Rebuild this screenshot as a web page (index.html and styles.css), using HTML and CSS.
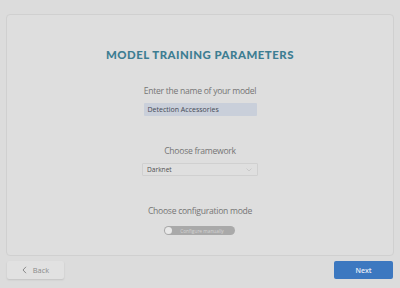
FILE: index.html
```html
<!DOCTYPE html>
<html>
<head>
<meta charset="utf-8">
<link rel="stylesheet" href="styles.css">
</head>
<body>
<div class="page">
  <div class="card">
    <h1 class="title">MODEL TRAINING PARAMETERS</h1>
    <div class="field first">
      <div class="label">Enter the name of your model</div>
      <div class="input">Detection Accessories</div>
    </div>
    <div class="field">
      <div class="label">Choose framework</div>
      <div class="select"><span>Darknet</span>
        <svg class="chev" width="6" height="4" viewBox="0 0 6 4"><path d="M0.5 0.5 L3 3 L5.5 0.5" fill="none" stroke="#c4c4c4" stroke-width="0.8"/></svg>
      </div>
    </div>
    <div class="field">
      <div class="label">Choose configuration mode</div>
      <div class="toggle"><span class="knob"></span><span class="ttext">Configure manually</span></div>
    </div>
  </div>
  <div class="footer">
    <button class="btn back"><svg width="5" height="8" viewBox="0 0 5 8"><path d="M4 0.8 L1 4 L4 7.2" fill="none" stroke="#8a8a8a" stroke-width="1"/></svg><span>Back</span></button>
    <button class="btn next">Next</button>
  </div>
</div>
</body>
</html>
```
FILE: styles.css
```css
html, body {
  margin: 0;
  padding: 0;
  background: #dcdcdc;
  width: 400px;
  height: 288px;
  overflow: hidden;
}
.page {
  display: flex;
  flex-direction: column;
  padding: 14px 6px 0 6px;
  font-family: "Open Sans", "Noto Sans", sans-serif;
}
.card {
  height: 240px;
  border: 1px solid #d0d0d0;
  border-radius: 4px;
  background: #dedede;
  display: flex;
  flex-direction: column;
  align-items: center;
}
.title {
  margin: 33px 0 0 0;
  font-family: "Lato", sans-serif;
  font-weight: 900;
  font-size: 11.4px;
  letter-spacing: 0.5px;
  color: #3d7d92;
  line-height: 14px;
}
.field {
  display: flex;
  flex-direction: column;
  align-items: center;
  margin-top: 29px;
}
.field.first {
  margin-top: 23px;
}
.label {
  font-size: 8.6px;
  letter-spacing: -0.28px;
  color: #757575;
  line-height: 12px;
}
.input {
  margin-top: 6px;
  width: 109px;
  height: 13px;
  background: #c9cfda;
  border-radius: 1px;
  font-size: 7px;
  line-height: 13px;
  color: #454a55;
  padding-left: 4px;
  box-sizing: content-box;
}
.select {
  margin-top: 6px;
  width: 105px;
  height: 11px;
  border: 1px solid #d0d0d0;
  border-radius: 1px;
  background: #dfdfdf;
  font-size: 6.6px;
  line-height: 11px;
  color: #505050;
  padding: 0 5px 0 4px;
  display: flex;
  align-items: center;
  justify-content: space-between;
}
.toggle {
  margin-top: 9px;
  width: 71px;
  height: 9px;
  border-radius: 5px;
  background: #a9a9a9;
  display: flex;
  align-items: center;
}
.knob {
  width: 7px;
  height: 7px;
  border-radius: 50%;
  background: #e8e8e8;
  margin-left: 1px;
}
.ttext {
  flex: 1;
  text-align: center;
  font-size: 4.8px;
  color: #d4d4d4;
  padding-right: 4px;
}
.footer {
  display: flex;
  justify-content: space-between;
  margin-top: 5px;
  padding: 0 1px;
}
.btn {
  height: 18px;
  border: none;
  border-radius: 2px;
  font-family: "Open Sans", sans-serif;
  font-size: 7px;
  padding: 0;
  display: flex;
  align-items: center;
  justify-content: center;
}
.back {
  width: 57px;
  background: #e1e1e1;
  color: #8a8a8a;
  box-shadow: 0 1px 2px rgba(0,0,0,0.12);
  gap: 6px;
  font-size: 7.4px;
}
.next {
  width: 59px;
  background: #3c78c0;
  color: #e8eef8;
  font-weight: 600;
}
```
